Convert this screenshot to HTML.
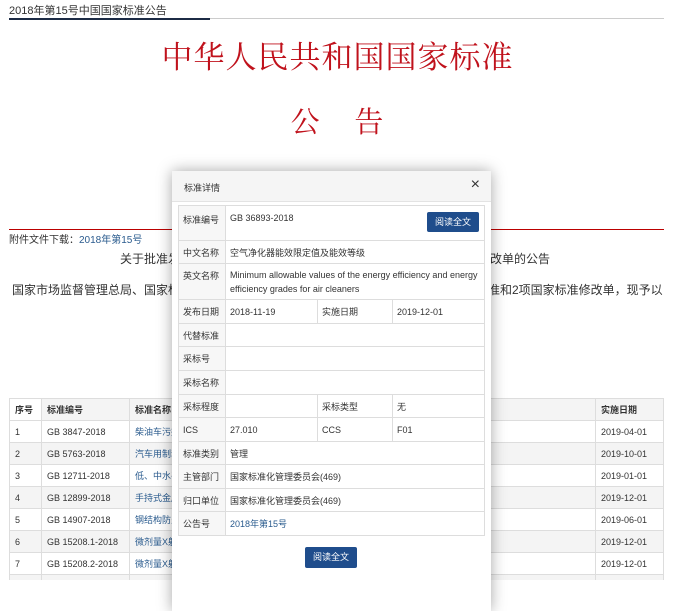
<!DOCTYPE html>
<html><head><meta charset="utf-8"><style>
body{margin:0;width:675px;height:601px;background:#fff;position:relative;overflow:hidden;font-family:"Liberation Sans","Noto Sans CJK SC",sans-serif;color:#333}
.a{position:absolute}
.bt{border-collapse:collapse;font-size:9px}
.bt td{border:1px solid #ddd;height:21px;padding:0 0 0 5px}
.bt tr:nth-child(odd) td{background:#f4f4f4}
.mt{border-collapse:collapse;font-size:9px;color:#333}
.mt td{border:1px solid #ddd;padding:0 4px;}
.mt td.l{background:#f7f7f7;width:38px}
a{color:#2a5b8e;text-decoration:none}
.btn{background:#1f4d8c;color:#fff;font-size:9px;border-radius:2px;text-align:center;line-height:20px}
</style></head><body>
<div class="a" style="left:9px;top:2px;font-size:11px;color:#333">2018年第15号中国国家标准公告</div>
<div class="a" style="left:9px;top:18px;width:655px;height:1px;background:#ccc"></div>
<div class="a" style="left:9px;top:18px;width:201px;height:2px;background:#1c2b45"></div>
<div class="a" style="left:0;width:675px;top:32px;text-align:center;font-family:'Noto Serif CJK SC',serif;font-size:31px;color:#c0121c;letter-spacing:1px">中华人民共和国国家标准</div>
<div class="a" style="left:0;width:675px;top:100px;text-align:center;font-family:'Noto Serif CJK SC',serif;font-size:29px;color:#c0121c;letter-spacing:1px">公&nbsp;&nbsp;&nbsp;&nbsp;告</div>
<div class="a" style="left:9px;top:229px;width:655px;height:1px;background:#b00"></div>
<div class="a" style="left:9px;top:231px;font-size:10px">附件文件下载：<a>2018年第15号</a></div>
<div class="a" style="left:120px;top:250px;font-size:12px">关于批准发布</div>
<div class="a" style="left:490px;top:250px;font-size:12px">改单的公告</div>
<div class="a" style="left:12px;top:281px;font-size:12px">国家市场监督管理总局、国家标</div>
<div class="a" style="left:488px;top:281px;font-size:12px">准和2项国家标准修改单，现予以</div>
<table class="a bt" style="left:9px;top:398px;width:655px">
<tr style="font-weight:bold"><td style="width:26px;background:#fff">序号</td><td style="width:82px">标准编号</td><td style="width:460px">标准名称</td><td>实施日期</td></tr>
<tr><td>1</td><td>GB 3847-2018</td><td><a>柴油车污染</a></td><td>2019-04-01</td></tr>
<tr><td>2</td><td>GB 5763-2018</td><td><a>汽车用制动</a></td><td>2019-10-01</td></tr>
<tr><td>3</td><td>GB 12711-2018</td><td><a>低、中水平</a></td><td>2019-01-01</td></tr>
<tr><td>4</td><td>GB 12899-2018</td><td><a>手持式金属</a></td><td>2019-12-01</td></tr>
<tr><td>5</td><td>GB 14907-2018</td><td><a>钢结构防火</a></td><td>2019-06-01</td></tr>
<tr><td>6</td><td>GB 15208.1-2018</td><td><a>微剂量X射线</a></td><td>2019-12-01</td></tr>
<tr><td>7</td><td>GB 15208.2-2018</td><td><a>微剂量X射线</a></td><td>2019-12-01</td></tr>
<tr><td>&nbsp;</td><td></td><td></td><td></td></tr>
</table>
<div class="a" style="left:0;top:580px;width:675px;height:21px;background:#fff"></div>
<div class="a" style="left:172px;top:171px;width:319px;height:440px;background:#fff;box-shadow:0 0 14px rgba(0,0,0,.35)">
 <div style="height:30px;background:#f5f5f5;border-bottom:1px solid #e3e3e3;position:relative">
  <span class="a" style="left:12px;top:10px;font-size:9px">标准详情</span>
  <span class="a" style="right:11px;top:5px;font-size:16px;font-weight:300">×</span>
 </div>
 <table class="mt a" style="left:6px;top:34px;width:307px">
  <tr style="height:35px"><td class="l" style="vertical-align:top;padding-top:7px">标准编号</td><td colspan="3" style="vertical-align:top;padding-top:7px;position:relative">GB 36893-2018<div class="btn a" style="right:5px;top:6px;width:52px">阅读全文</div></td></tr>
  <tr style="height:23px"><td class="l">中文名称</td><td colspan="3">空气净化器能效限定值及能效等级</td></tr>
  <tr style="height:36px"><td class="l" style="vertical-align:top;padding-top:5px">英文名称</td><td colspan="3" style="line-height:14px">Minimum allowable values of the energy efficiency and energy efficiency grades for air cleaners</td></tr>
  <tr style="height:24px"><td class="l">发布日期</td><td style="width:83px">2018-11-19</td><td style="width:66px">实施日期</td><td>2019-12-01</td></tr>
  <tr style="height:23px"><td class="l">代替标准</td><td colspan="3"></td></tr>
  <tr style="height:24px"><td class="l">采标号</td><td colspan="3"></td></tr>
  <tr style="height:24px"><td class="l">采标名称</td><td colspan="3"></td></tr>
  <tr style="height:23px"><td class="l">采标程度</td><td></td><td>采标类型</td><td>无</td></tr>
  <tr style="height:24px"><td class="l">ICS</td><td>27.010</td><td>CCS</td><td>F01</td></tr>
  <tr style="height:23px"><td class="l">标准类别</td><td colspan="3">管理</td></tr>
  <tr style="height:24px"><td class="l">主管部门</td><td colspan="3">国家标准化管理委员会(469)</td></tr>
  <tr style="height:23px"><td class="l">归口单位</td><td colspan="3">国家标准化管理委员会(469)</td></tr>
  <tr style="height:24px"><td class="l">公告号</td><td colspan="3"><a>2018年第15号</a></td></tr>
 </table>
 <div class="btn a" style="left:133px;top:376px;width:52px;height:21px;line-height:21px">阅读全文</div>
</div>
</body></html>
